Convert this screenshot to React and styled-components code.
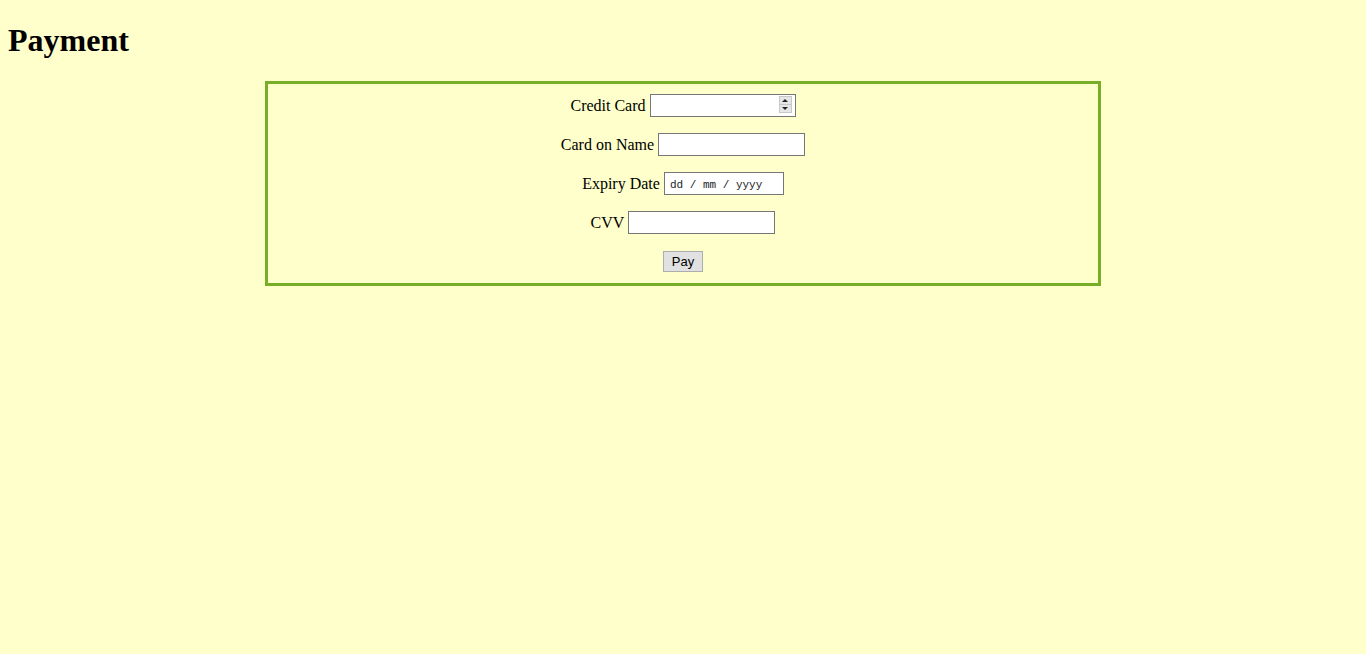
import React from "react";
import styled, { createGlobalStyle } from "styled-components";

const Global = createGlobalStyle`
  html, body {
    background: #ffffcc;
  }
  body {
    margin: 8px;
    font-family: "Liberation Serif", "Times New Roman", serif;
    font-size: 16px;
    color: #000;
  }
`;

const Title = styled.h1`
  font-size: 32px;
  font-weight: bold;
  margin: 14px 0 22px;
  line-height: 37px;
`;

const Form = styled.form`
  width: 836px;
  box-sizing: border-box;
  margin: 0 auto;
  border: 3px solid #78ad28;
  padding: 10px 0 10px;
  display: flex;
  flex-direction: column;
  align-items: center;
  gap: 16px;
`;

const Row = styled.div`
  display: flex;
  align-items: center;
  gap: 4px;
  height: 23px;
`;

const Label = styled.label`
  font-size: 16px;
  line-height: 23px;
`;

const Field = styled.div`
  position: relative;
  display: flex;
`;

const Input = styled.input`
  width: ${(p) => p.$w || 147}px;
  height: 23px;
  box-sizing: border-box;
  border: 1px solid #767676;
  background: #fff;
  padding: ${(p) => (p.$mono ? "2px 5px 0" : "1px 4px")};
  font-family: ${(p) => (p.$mono ? '"Liberation Mono", monospace' : '"Liberation Sans", Arial, sans-serif')};
  font-size: ${(p) => (p.$mono ? 11 : 13)}px;
  outline: none;
  &::placeholder {
    color: #222;
  }
  &::-webkit-inner-spin-button,
  &::-webkit-outer-spin-button {
    -webkit-appearance: none;
    margin: 0;
  }
  -moz-appearance: textfield;
`;

const Spinner = styled.div`
  position: absolute;
  right: 4px;
  top: 2px;
  width: 13px;
  height: 17px;
  display: flex;
  flex-direction: column;
  pointer-events: none;
`;

const SpinHalf = styled.div`
  flex: 1;
  background: #e6e6e6;
  border: 1px solid #c8c8c8;
  ${(p) => (p.$down ? "border-top: none;" : "")}
  display: flex;
  align-items: center;
  justify-content: center;
  &::after {
    content: "";
    width: 0;
    height: 0;
    border-left: 3px solid transparent;
    border-right: 3px solid transparent;
    ${(p) => (p.$down ? "border-top: 3px solid #222;" : "border-bottom: 3px solid #222;")}
  }
`;

const Button = styled.button`
  width: 40px;
  height: 21px;
  font-family: "Liberation Sans", Arial, sans-serif;
  font-size: 13px;
  background: #e1e1e1;
  border: 1px solid #adadad;
  border-radius: 0;
  padding: 0;
  color: #000;
`;

export default function App() {
  return (
    <>
      <Global />
      <Title>Payment</Title>
      <Form onSubmit={(e) => e.preventDefault()}>
        <Row>
          <Label>Credit Card</Label>
          <Field>
            <Input type="number" $w={146} />
            <Spinner>
              <SpinHalf />
              <SpinHalf $down />
            </Spinner>
          </Field>
        </Row>
        <Row>
          <Label>Card on Name</Label>
          <Input type="text" />
        </Row>
        <Row>
          <Label>Expiry Date</Label>
          <Input type="text" $w={120} $mono placeholder="dd / mm / yyyy" />
        </Row>
        <Row>
          <Label>CVV</Label>
          <Input type="text" />
        </Row>
        <Row>
          <Button type="submit">Pay</Button>
        </Row>
      </Form>
    </>
  );
}
